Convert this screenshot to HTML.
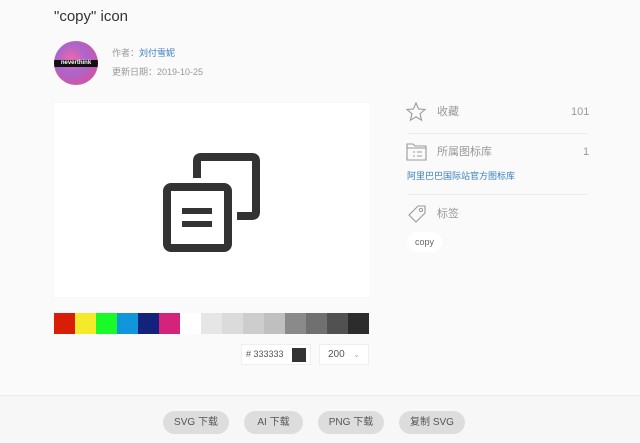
<!DOCTYPE html>
<html><head><meta charset="utf-8"><style>
*{margin:0;padding:0;box-sizing:border-box}
body{width:640px;height:443px;background:#fafafa;font-family:"Liberation Sans","Noto Sans CJK SC",sans-serif;position:relative;overflow:hidden;color:#333}
.a{position:absolute}
.t{font-size:11px;color:#999;line-height:12px}
.sw{position:absolute;top:313px;height:21px;width:21px}
.btn{position:absolute;top:411px;height:23px;border-radius:12px;background:#ddd;font-size:10px;color:#555;text-align:center;line-height:23px}
.hr{position:absolute;left:407px;width:181px;height:1px;background:#ececec}
</style></head><body>
<div class="a" style="left:54px;top:8px;font-size:15px;color:#333">"copy" icon</div>
<div class="a" style="left:54px;top:41px;width:44px;height:44px;border-radius:50%;background:radial-gradient(circle at 40% 40%,#e6a 0,#a6c 40%,#c5a 70%,#968 100%);overflow:hidden"><div style="position:absolute;top:19px;left:0;width:44px;height:7px;background:#111;color:#fff;font-size:6px;line-height:7px;text-align:center;font-weight:bold">neverthink</div></div>
<div class="a t" style="left:112px;top:47px;font-size:9px">作者：<span style="color:#3a7fc1">刘付雪妮</span></div>
<div class="a t" style="left:112px;top:66px;font-size:9px">更新日期：2019-10-25</div>
<div class="a" style="left:54px;top:103px;width:315px;height:194px;background:#fff"></div>
<svg class="a" style="left:54px;top:103px" width="315" height="194">
<g fill="none" stroke="#333" stroke-width="8">
<path d="M143 75 V58 Q143 54 147 54 H198 Q202 54 202 58 V109 Q202 113 198 113 H183"/>
<rect x="113" y="84" width="61" height="61" rx="4"/>
</g>
<rect x="128" y="105" width="30" height="6" fill="#333"/>
<rect x="128" y="118" width="30" height="6" fill="#333"/>
</svg>
<div class="sw" style="left:54px;background:#d81e06"></div>
<div class="sw" style="left:75px;background:#f4ea2a"></div>
<div class="sw" style="left:96px;background:#1afa29"></div>
<div class="sw" style="left:117px;background:#1296db"></div>
<div class="sw" style="left:138px;background:#13227a"></div>
<div class="sw" style="left:159px;background:#d4237a"></div>
<div class="sw" style="left:180px;background:#fff"></div>
<div class="sw" style="left:201px;background:#e6e6e6"></div>
<div class="sw" style="left:222px;background:#dbdbdb"></div>
<div class="sw" style="left:243px;background:#cdcdcd"></div>
<div class="sw" style="left:264px;background:#bfbfbf"></div>
<div class="sw" style="left:285px;background:#8a8a8a"></div>
<div class="sw" style="left:306px;background:#707070"></div>
<div class="sw" style="left:327px;background:#515151"></div>
<div class="sw" style="left:348px;background:#2c2c2c;width:21px"></div>
<div class="a" style="left:241px;top:344px;width:70px;height:21px;background:#fff;border:1px solid #eee;font-size:9px;color:#555;line-height:19px;padding-left:4px"># 333333<span style="position:absolute;right:4px;top:3px;width:14px;height:14px;background:#333"></span></div>
<div class="a" style="left:319px;top:344px;width:50px;height:21px;background:#fff;border:1px solid #eee;font-size:10px;color:#555;line-height:19px;padding-left:8px">200 <span style="position:absolute;right:8px;color:#aaa;font-size:8px">⌄</span></div>
<svg class="a" style="left:405px;top:101px" width="22" height="22"><path d="M11 2 L13.6 8 L20 8.5 L15 12.8 L16.6 19.2 L11 15.8 L5.4 19.2 L7 12.8 L2 8.5 L8.4 8Z" fill="none" stroke="#999" stroke-width="1.1"/></svg>
<div class="a t" style="left:437px;top:106px">收藏</div>
<div class="a t" style="left:571px;top:106px">101</div>
<div class="hr" style="top:133px"></div>
<svg class="a" style="left:406px;top:142px" width="22" height="20"><path d="M1 2 H7 L9 4 H20 V18 H1Z M1 6 H20" fill="none" stroke="#999" stroke-width="1.1"/><path d="M7 10 H9 M11 10 H16 M7 14 H9 M11 14 H16" stroke="#999" stroke-width="1.1"/></svg>
<div class="a t" style="left:437px;top:146px">所属图标库</div>
<div class="a t" style="left:583px;top:146px">1</div>
<div class="a" style="left:407px;top:170px;font-size:9px;line-height:12px;color:#3a7fc1">阿里巴巴国际站官方图标库</div>
<div class="hr" style="top:194px"></div>
<svg class="a" style="left:406px;top:204px" width="22" height="22"><path d="M3 11 L12 2 H19 V9 L10 18 Z" fill="none" stroke="#999" stroke-width="1.1"/><circle cx="15" cy="6" r="1.6" fill="none" stroke="#999"/></svg>
<div class="a t" style="left:437px;top:208px">标签</div>
<div class="a" style="left:407px;top:232px;width:35px;height:20px;border-radius:10px;background:#fff;font-size:9px;color:#666;text-align:center;line-height:20px">copy</div>
<div class="a" style="left:0;top:395px;width:640px;height:48px;background:#f7f7f7;border-top:1px solid #ececec"></div>
<div class="btn" style="left:163px;width:66px">SVG 下载</div>
<div class="btn" style="left:244px;width:59px">AI 下载</div>
<div class="btn" style="left:318px;width:66px">PNG 下载</div>
<div class="btn" style="left:399px;width:66px">复制 SVG</div>
</body></html>
